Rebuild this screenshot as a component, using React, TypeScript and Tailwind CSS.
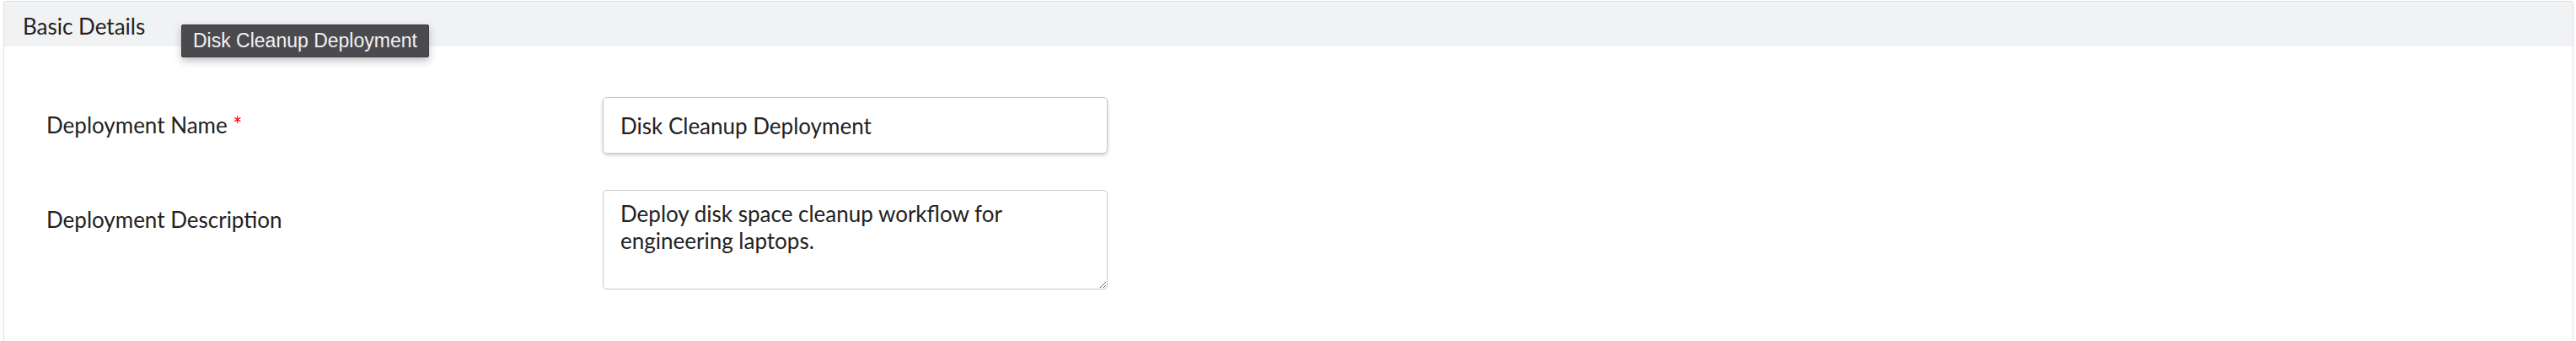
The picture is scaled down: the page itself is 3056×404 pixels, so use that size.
import React from 'react';

export default function App() {
    return (
        <div className="w-[3056px] h-[404px] overflow-hidden bg-white pt-px pl-1 pr-[3px] font-['Lato',sans-serif] text-[#222]">
            <div className="relative border border-[#dedee0] rounded-t-[2px] h-[440px]">
                <div className="h-[53px] bg-[#f1f2f4] pl-[22px] pt-[10px] text-[26px]">Basic Details</div>

                <div className="absolute left-[210px] top-[27px] h-[39px] px-[13px] flex items-center bg-[#4b4b4f] border border-[#3e3e42] rounded-[2px] shadow-[0_4px_10px_rgba(0,0,0,0.25)] font-['Liberation_Sans',Arial,sans-serif] text-[23px] text-[#f2f2f2] whitespace-nowrap">
                    Disk Cleanup Deployment
                </div>

                <div className="flex flex-col gap-[43px] pt-[60px] pl-[50px]">
                    <div className="flex items-center">
                        <label className="w-[660px] text-[26px]">
                            Deployment Name <span className="text-[#f00]">*</span>
                        </label>
                        <input
                            readOnly
                            value="Disk Cleanup Deployment"
                            className="w-[599px] h-[67px] px-[20px] border border-[#c6c6cb] rounded-[5px] shadow-[0_2px_4px_rgba(0,0,0,0.18)] text-[26px] text-[#222] outline-none"
                        />
                    </div>
                    <div className="flex items-start">
                        <label className="w-[660px] pt-[16px] text-[26px]">Deployment Description</label>
                        <textarea
                            readOnly
                            defaultValue="Deploy disk space cleanup workflow for engineering laptops."
                            className="block w-[599px] h-[118px] px-[20px] pt-[11px] border border-[#c6c6cb] rounded-[5px] text-[26px] leading-[32px] text-[#222] outline-none"
                        />
                    </div>
                </div>
            </div>
        </div>
    );
}
